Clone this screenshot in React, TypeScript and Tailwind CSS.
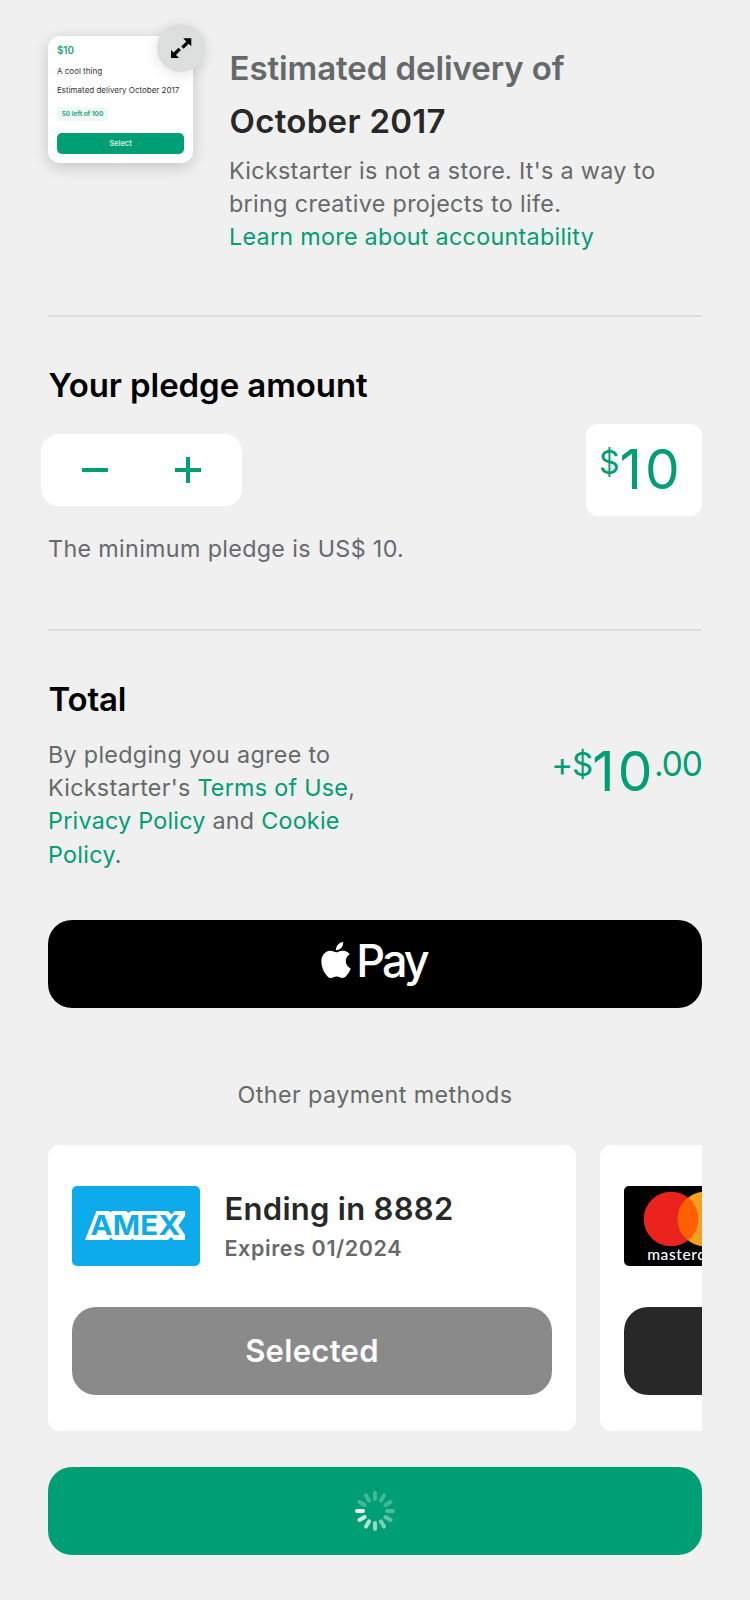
import type { ReactNode } from "react";
import { SiApple } from "react-icons/si";

const SPOKES = [0.27, 0.27, 0.27, 0.3, 0.38, 0.5, 0.6, 0.7, 0.8, 0.9, 0.27, 0.27];

function Spinner() {
  return (
    <svg width="40" height="40" viewBox="0 0 40 40">
      {SPOKES.map((opacity, i) => (
        <rect key={i} x="18" y="0" width="4" height="10" rx="2" fill="#fff" opacity={opacity} transform={`rotate(${i * 30} 20 20)`} />
      ))}
    </svg>
  );
}

function ExpandIcon() {
  return (
    <svg width="48" height="48" viewBox="0 0 48 48">
      <g fill="#000" stroke="none">
        <path d="M26.2 14.3h8.1v8l-2.6-2.5-5.1 5-2.4-2.4 5.1-5z" />
        <path d="M22.1 34H14v-8l2.6 2.5 4.9-4.8 2.4 2.4-4.9 4.8z" />
      </g>
    </svg>
  );
}

function AmexLogo() {
  return (
    <svg width="128" height="80" viewBox="0 0 128 80" className="block shrink-0">
      <rect width="128" height="80" rx="5" fill="#0dabeb" />
      <path
        d="M24.500 25H37l1.500 1.500L40 25h14l2.500 2L59 25h37l3.500 3.500L103 25h10v5l-6.500 9.500L113 49v5h-11l-3-3-3 3H62l-1.500-1.500L59 54H41l-2-2.500-2 2.500H13z"
        fill="#fff"
      />
      <text
        x="18.500"
        y="49.400"
        textLength="90"
        lengthAdjust="spacingAndGlyphs"
        fontFamily="Inter, sans-serif"
        fontWeight="700"
        fontSize="27.500"
        fill="#0dabeb"
      >
        AMEX
      </text>
    </svg>
  );
}

function MastercardLogo() {
  return (
    <svg width="128" height="80" viewBox="0 0 128 80" className="block shrink-0">
      <rect width="128" height="80" rx="5" fill="#000" />
      <circle cx="47" cy="33" r="27.3" fill="#eb231e" />
      <circle cx="81" cy="33" r="27.3" fill="#f79f1e" />
      <path d="M64 11.6a27.3 27.3 0 0 1 0 42.800a27.3 27.3 0 0 1 0-42.800z" fill="#ff5f00" />
      <text x="23.2" y="74" textLength="81.5" fontFamily="Lato, sans-serif" fontWeight="500" fontSize="15.500" fill="#fff">
        mastercard
      </text>
    </svg>
  );
}

function Link({ children }: { children: ReactNode }) {
  return <a className="text-[#009e74]">{children}</a>;
}

function RewardThumbnail() {
  return (
    <div className="relative mt-9 h-[127px] w-[145px] shrink-0 rounded-[12px] bg-white pt-[9px] pl-[9px] tracking-normal shadow-[0_4px_16px_rgba(0,0,0,0.18)]">
      <p className="h-[21px] text-[9.8px] leading-[12px] font-semibold text-[#12a87e]">$10</p>
      <p className="h-[19px] text-[8px] leading-[10px] text-[#333]">A cool thing</p>
      <p className="h-[22px] text-[8px] leading-[10px] text-[#333]">Estimated delivery October 2017</p>
      <p className="h-[14px] w-[51px] rounded-[3px] bg-[#eff8f6] text-center text-[6.5px] leading-[14px] font-bold text-[#1fab84]">
        50 left of 100
      </p>
      <div className="mt-[12px] h-[21px] w-[127px] rounded-[5px] bg-[#009e74] text-center text-[7.5px] leading-[21px] font-semibold text-[#d5efe7]">
        Select
      </div>
      <div className="absolute -top-[12px] left-[109px] h-12 w-12 rounded-full bg-[#dcdedd] shadow-[0_2px_14px_rgba(0,0,0,0.12)]">
        <ExpandIcon />
      </div>
    </div>
  );
}

function PaymentCard({ logo, title, expires, action, className }: { logo: ReactNode; title: string; expires: string; action: string; className: string }) {
  return (
    <div className="h-[286px] w-[528px] shrink-0 rounded-[12px] bg-white px-6 pt-[41px]">
      <div className="flex h-20">
        {logo}
        <div className="ml-[24.5px] pt-[3px]">
          <p className="text-[31px] leading-[40px] font-semibold tracking-[0.28px] text-[#282828]">{title}</p>
          <p className="text-[21.5px] leading-[38px] font-semibold tracking-[0.6px] text-[#656969]">{expires}</p>
        </div>
      </div>
      <button className={`mt-[41px] block h-[88px] w-[480px] rounded-[24px] pb-[2px] text-[31px] font-semibold tracking-[0.3px] text-white ${className}`}>{action}</button>
    </div>
  );
}

export default function App() {
  return (
    <main className="h-[1600px] w-[750px] overflow-hidden bg-[#f0f0f0] px-12 font-['Inter',sans-serif] text-[23.3px] leading-[33px] tracking-[0.31px] text-[#656969]">
      <header className="flex h-[315px]">
        <RewardThumbnail />
        <div className="ml-[36px] pt-[41px] whitespace-nowrap">
          <h1 className="pl-[0.5px] text-[33px] font-semibold">
            <span className="block leading-[54px] tracking-[-0.08px]">Estimated delivery of</span>
            <span className="block leading-[52px] tracking-[0.3px] text-[#282828]">October 2017</span>
          </h1>
          <p className="mt-[7px]">
            Kickstarter is not a store. It's a way to
            <br />
            <span className="tracking-[0.35px]">bring creative projects to life.</span>
            <br />
            <span className="tracking-[0.29px]">
              <Link>Learn more about accountability</Link>
            </span>
          </p>
        </div>
      </header>

      <section className="h-[314px] border-t-2 border-[#dcdedd] pt-12">
        <h2 className="pl-[0.5px] text-[33px] leading-[40px] font-semibold tracking-[-0.08px] text-black">Your pledge amount</h2>
        <div className="mt-[19px] flex h-[92px] items-center justify-between">
          <div className="-ml-[7px] flex h-[72px] w-[201px] rounded-[18px] bg-white px-[7.5px]">
            <button className="flex w-[93px] items-center justify-center">
              <span className="h-[4px] w-[26px] bg-[#009e74]" />
            </button>
            <button className="flex w-[93px] items-center justify-center">
              <svg width="26" height="26" viewBox="0 0 26 26">
                <path d="M13 0v26M0 13h26" stroke="#009e74" strokeWidth="4" />
              </svg>
            </button>
          </div>
          <div className="flex h-[92px] w-[116px] rounded-[12px] bg-white pt-[12px] pl-[13px] text-[#009e74]">
            <span className="pt-px text-[32px] leading-[52px] tracking-normal">$</span>
            <span className="text-[55px] leading-[66px] tracking-[3px]">10</span>
          </div>
        </div>
        <p className="mt-4 tracking-[0.34px] text-[#68696e]">The minimum pledge is US$ 10.</p>
      </section>

      <section className="border-t-2 border-[#dcdedd] pt-12">
        <h2 className="pl-[0.5px] text-[33px] leading-[40px] font-semibold tracking-[-0.2px] text-black">Total</h2>
        <div className="mt-[19px] flex h-[132px] justify-between">
          <p className="leading-[33.2px] whitespace-nowrap">
            By pledging you agree to
            <br />
            <span className="tracking-[0.27px]">
              Kickstarter's <Link>Terms of Use</Link>,
            </span>
            <br />
            <span className="tracking-[0.25px]">
              <Link>Privacy Policy</Link> and <Link>Cookie</Link>
            </span>
            <br />
            <Link>Policy</Link>.
          </p>
          <div className="flex text-[#009e74]">
            <span className="text-[33px] leading-[52px] tracking-[-0.9px]">+$</span>
            <span className="-mr-[1.5px] text-[55px] leading-[66px] tracking-[3px]">10</span>
            <span className="text-[33.5px] leading-[52px] tracking-[-1px]">.00</span>
          </div>
        </div>
      </section>

      <button className="mt-[50px] flex h-[88px] w-full justify-center rounded-[24px] bg-black pr-[5px] text-white">
        <SiApple size={36} className="mt-[22px]" />
        <span className="mt-[17px] ml-[2px] text-[45px] leading-[48px] font-medium tracking-[-3px]">Pay</span>
      </button>

      <p className="mt-[70px] text-center tracking-[0.41px]">Other payment methods</p>

      <div className="mt-[34px] flex gap-6 overflow-hidden">
        <PaymentCard logo={<AmexLogo />} title="Ending in 8882" expires="Expires 01/2024" action="Selected" className="bg-[#8a8a8a]" />
        <PaymentCard logo={<MastercardLogo />} title="" expires="" action="" className="bg-[#282828]" />
      </div>

      <button className="mt-[36px] flex h-[88px] w-full items-center justify-center rounded-[24px] bg-[#009e74]">
        <Spinner />
      </button>
    </main>
  );
}
